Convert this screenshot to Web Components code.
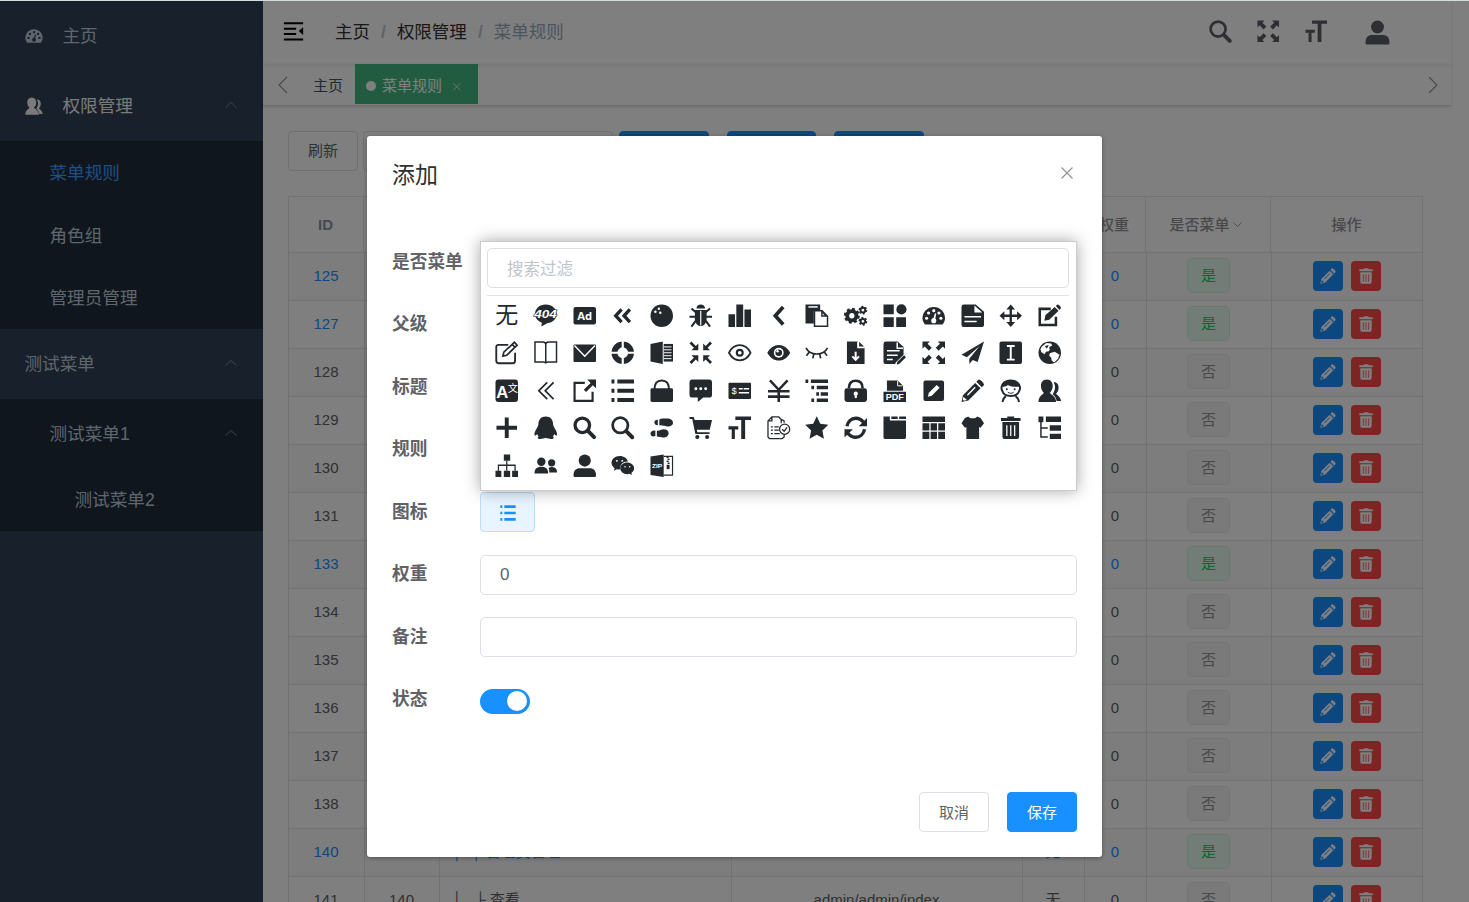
<!DOCTYPE html>
<html lang="zh-CN">
<head>
<meta charset="utf-8">
<title>菜单规则</title>
<style>
html,body{margin:0;height:100%}
body{font:15px/1.2 "Liberation Sans","Noto Sans CJK SC",sans-serif;color:#606266;background:#fff;overflow:hidden}
</style>
</head>
<body>
<admin-app></admin-app>
<script>
const ICONS = {
  none:'',
  e404:'<path d="M12 .5C5.600.5 1 4.800 1 10.300c0 4 3 7.400 7 8.900L7.500 23l6-3.300c6-.6 9.500-4.600 9.500-9.400C23 4.800 18.400.5 12 .5z"/><text x="11.800" y="14.800" text-anchor="middle" font-size="12" font-weight="700" font-style="italic" fill="#fff" stroke="#24292e" stroke-width="1.200" paint-order="stroke" textLength="23" lengthAdjust="spacingAndGlyphs">404</text>',
  ad:'<rect x=".5" y="3" width="23" height="18" rx="2"/><text x="12" y="16.300" text-anchor="middle" font-size="11.500" font-weight="700" fill="#fff" font-family="Open Sans,sans-serif">Ad</text>',
  back2:'<path d="M10.800 5.500 4.800 12l6 6.500M19.300 5.500 13.300 12l6 6.500" fill="none" stroke="currentColor" stroke-width="3.400"/>',
  ball:'<circle cx="12" cy="12" r="11.500"/><g fill="#fff"><circle cx="9" cy="4.800" r="1.200"/><circle cx="5.500" cy="8" r="1.300"/><circle cx="10.500" cy="9" r="1.300"/></g>',
  bug:'<path d="M7.500 4.500C8 1.500 10 .5 12 .5s4 1 4.500 4z"/><path d="M6 6h12v9c0 4-2.500 7.500-6 7.500S6 19 6 15z"/><path d="M12 7v15" stroke="#fff" stroke-width="1.200"/><path d="M7 8.500 2.500 4.500M17 8.500l4.500-4M7 13H.5M17 13h6.500M7 17l-4.500 6M17 17l4.500 6" fill="none" stroke="currentColor" stroke-width="2.100"/>',
  chart:'<path d="M.5 10.500H7.200V23.500H.5zM8.500.5h7v23h-7zM16.800 5.500H23.500v18h-6.700z"/>',
  back:'<path d="M16.500 3 8.500 12l8 9" fill="none" stroke="currentColor" stroke-width="3.800"/>',
  clip:'<path d="M.5.5H15.500V7H9v13H.5z"/><path d="M3.500 3h9.500" stroke="#fff" stroke-width="1.500"/><path d="M9.700 7h7.800l5.500 5.500V22.800H9.700z" fill="#fff" stroke="currentColor" stroke-width="1.500"/><path d="M16.500 6.500V13H23.500z"/><path d="M18 9.500v2h2z" fill="#fff"/>',
  gears:'<circle cx="8" cy="12" r="4.700" fill="none" stroke="currentColor" stroke-width="4"/><circle cx="8" cy="12" r="6.800" fill="none" stroke="currentColor" stroke-width="2.600" stroke-dasharray="2.900 2.440"/><g fill="none" stroke="currentColor"><circle cx="19.300" cy="6.300" r="2.400" stroke-width="2"/><circle cx="19.300" cy="6.300" r="3.700" stroke-width="1.600" stroke-dasharray="1.900 1.970"/><circle cx="19.300" cy="17.700" r="2.400" stroke-width="2"/><circle cx="19.300" cy="17.700" r="3.700" stroke-width="1.600" stroke-dasharray="1.900 1.970"/></g>',
  comp:'<path d="M.5.5H11v10H.5zM.5 13.500H11v10H.5zM13.500 13.500H23.500v10H13.500z"/><circle cx="18.800" cy="5.500" r="5.200"/>',
  dash:'<path d="M3 21C1.500 19 .5 16.800.5 14.500.5 8 5.600 3 12 3s11.500 5 11.500 11.500c0 2.300-1 4.500-2.500 6.500z"/><g fill="var(--hole,#fff)"><circle cx="4.700" cy="14.500" r="1.600"/><circle cx="6.700" cy="9.200" r="1.600"/><circle cx="12" cy="6.800" r="1.600"/><circle cx="17.300" cy="9.200" r="1.600"/><circle cx="19.300" cy="14.500" r="1.600"/><circle cx="12" cy="17" r="2.600"/><path d="M11.200 16 13.200 9.500l1.400.4-1.400 6.600z"/></g>',
  doc:'<path d="M3 .5h12l8.500 7.500V21.500a2 2 0 0 1-2 2H2.500a2 2 0 0 1-2-2V3A2.500 2.500 0 0 1 3 .5z"/><path d="M3.500 13h17M3.500 17.800h12.500" stroke="#fff" stroke-width="1.600" fill="none"/><path d="M13.700 1.500v7.300h8z" fill="#fff"/>',
  drag:'<path d="M12 .5 16.500 5.500H13.200v5.300h5.300V7.500L23.500 12l-5 4.500v-3.300h-5.300v5.300h3.300L12 23.500l-4.500-5h3.300v-5.300H5.500v3.300L.5 12l5-4.500v3.300h5.300V5.500H7.500z"/>',
  edit:'<path d="M13 5H1.800v16.500h16.500v-8.500" fill="none" stroke="currentColor" stroke-width="2.600"/><path d="m6.500 17 1-5.500L17 3l4 4-9.500 9zM18.200 2 20 .6c1.200 0 3.400 2 3.500 3.500L22 6z"/>',
  edit2:'<path d="M13.500 4H3.500C2 4 1.300 4.800 1.300 6v14c0 1.500.8 2.700 2.200 2.700H18c1.500 0 2.500-.8 2.500-2.500V12" fill="none" stroke="currentColor" stroke-width="1.900"/><path d="m8 15.500 1-4L19.800 1.300l2.800 3L12 14.500z M17.500 3.500l3 3" fill="none" stroke="currentColor" stroke-width="1.700"/>',
  book:'<path d="M1 1h8c2 0 3 1 3 2.500C12 2 13 1 15 1h8v20.500h-8.500c-1.500 0-2.500.5-2.500 1.500 0-1-1-1.500-2.500-1.500H1zM12 3.500V22" fill="none" stroke="currentColor" stroke-width="1.500"/>',
  mail:'<rect x=".5" y="3.500" width="23" height="18" rx="1"/><path d="M1.500 4.500 12 15.500 22.500 4.500" fill="none" stroke="#fff" stroke-width="1.500"/>',
  ring:'<circle cx="12" cy="12" r="8.500" fill="none" stroke="currentColor" stroke-width="6"/><path d="M12 0v8M12 16v8M0 12h8M16 12h8" stroke="#fff" stroke-width="2.200"/>',
  excel:'<path d="M.5 3 13 .5v23L.5 21z"/><path d="M14 3h9.500v18H14z"/><path d="M14 6h8M14 9h8M14 12h8M14 15h8M14 18h8" stroke="#fff" stroke-width="1"/>',
  exitfs:'<path d="M9.500 2.500V9.500H2.500L5 7 .5 2.500l2-2L7 5zM14.500 2.500V9.500H21.500L19 7 23.500 2.500l-2-2L17 5zM9.500 21.500V14.500H2.500L5 17 .5 21.500l2 2L7 19zM14.500 21.500V14.500H21.500L19 17l4.500 4.500-2 2L17 19z"/>',
  eye:'<path d="M1 12C3.500 7 7.500 4.300 12 4.300s8.500 2.700 11 7.700c-2.500 5-6.500 7.700-11 7.700S3.500 17 1 12z" fill="none" stroke="currentColor" stroke-width="1.800"/><circle cx="12" cy="12" r="3" fill="none" stroke="currentColor" stroke-width="2.200"/>',
  eyeopen:'<path d="M.3 12C3 7 7.200 4 12 4s9 3 11.700 8c-2.700 5-6.900 8-11.700 8S3 17 .3 12z"/><circle cx="12" cy="12" r="5" fill="#fff"/><circle cx="12" cy="12" r="3.400"/><circle cx="10.800" cy="10.500" r="1.300" fill="#fff"/>',
  closed:'<path d="M1 7c2 4 6 6.300 11 6.300S21 11 23 7M4.500 11 1.500 15M9 13.300 8 17.800M15 13.300l1 4.500M19.500 11l3 4" fill="none" stroke="currentColor" stroke-width="1.700"/>',
  dl:'<path d="M3 .5h11V7h7v16.500H3z"/><path d="M15.200.5 21 6h-5.800z"/><path d="M14.500 1v5.500H21M11.900 11v8M8.500 15.700l3.400 3.500 3.400-3.500" fill="none" stroke="#fff" stroke-width="2"/>',
  form:'<path d="M3 .5h12l6 5.500v8L13 22l-.5 1.500H2.500a2 2 0 0 1-2-2V3A2.500 2.500 0 0 1 3 .5z"/><path d="M14.500 1.500v6h6M4 10h13M4 14.500h11M4 19h6" stroke="#fff" stroke-width="1.500" fill="none"/><path d="m14.500 21.500 7-7 2 2-7 7-2.500.4z"/>',
  fs:'<path d="M.5.5H8L5.700 2.800 10 7 7 10 2.800 5.700.5 8zM23.500.5H16l2.300 2.300L14 7l3 3 4.200-4.300L23.500 8zM.5 23.500H8l-2.300-2.300L10 17l-3-3-4.200 4.300L.5 16zM23.500 23.500H16l2.300-2.300L14 17l3-3 4.200 4.300 2.300-2.300z"/>',
  plane:'<path d="M23.500.5.5 14l5.500 2.500L19 5 8.500 18v5.500l3.500-4 5 2z"/>',
  guide:'<rect x=".5" y=".5" width="23" height="23" rx="2"/><path d="M8 5h8M8 19h8M12 5v14" stroke="#fff" stroke-width="2" fill="none"/>',
  globe:'<circle cx="12" cy="12" r="11.500"/><path d="M4 5.500 8.500 2l5 .5 1 2L11.500 6 12 9l-1 1.500L8 11l-1 2.500-3.500-2-1-3zM12 12.500l5-1.500 5 3-1.500 4-4 4-2.500-2-.5-3-2-2z" fill="#fff"/><path d="m7 5 4-1-2 4z"/>',
  lang:'<rect x=".5" y=".5" width="23" height="23" rx="3"/><text x="1.300" y="19" font-size="17" font-weight="700" fill="#fff">A</text><text x="13" y="13" font-size="10.500" fill="#fff">文</text>',
  thin2:'<path d="M13.500 3.500 5 12l8.500 8.500M20 3.500 11.500 12l8.500 8.500" fill="none" stroke="currentColor" stroke-width="1.800"/>',
  link:'<path d="M12 4H1.600v18.400H20V13" fill="none" stroke="currentColor" stroke-width="2.200"/><path d="M14.500.5h9v9l-3.200-3.200-7 7L11 11l7-7z"/>',
  list:'<path d="M6.500.5h17v4h-17zM6.500 10h17v4h-17zM6.500 19.500h17v4h-17zM.5.5H3.500v4H.5zM.5 10h3v4h-3zM.5 19.500h3v4h-3z"/>',
  lock:'<rect x=".5" y="9.500" width="23" height="14" rx="1.500"/><path d="M4.500 11C4.500 4.500 7.500 1.500 12 1.500S19.500 4.500 19.500 11" fill="none" stroke="currentColor" stroke-width="2"/>',
  msg:'<path d="M3.500.5h17a3 3 0 0 1 3 3V16a3 3 0 0 1-3 3H14.500L9 23.500V19H3.500a3 3 0 0 1-3-3V3.500a3 3 0 0 1 3-3z"/><g fill="#fff"><circle cx="7" cy="10" r="1.500"/><circle cx="12" cy="10" r="1.500"/><circle cx="17" cy="10" r="1.500"/></g>',
  card:'<rect x=".5" y="3.800" width="23" height="16.700" rx="1"/><text x="3.500" y="15.500" font-size="9.500" fill="#fff">$</text><path d="M11 10h4M16 10h5.500M11 14h10.500" stroke="#fff" stroke-width="1.500"/>',
  yen:'<path d="M3 1.500 12 11l9-9.500M12 11v12.500M1 12.500h22M1 18h22" fill="none" stroke="currentColor" stroke-width="2.600"/>',
  nested:'<path d="M6 .5h17.500v3.500H6zM12 7h11.500v3.500H12zM16 13.500h7.500V17H16zM12 20h11.500v3.500H12zM.5.5h2.800v3.500H.5zM6.500 7h2.800v3.500H6.500zM11.500 13.500h2.800V17h-2.800zM6.500 20h2.800v3.500H6.500z"/>',
  pwd:'<rect x=".5" y="9.500" width="23" height="14" rx="2.500"/><path d="M5 9.500C5 4 7.800 1.800 12 1.800S19 4 19 9.500" fill="none" stroke="currentColor" stroke-width="2.700"/><path d="M12 13.500v6" stroke="#fff" stroke-width="2.200"/><circle cx="12" cy="15" r="2.200" fill="#fff"/>',
  pdf:'<path d="M4 1.500h11l5.500 5.500v5H4z"/><path d="M15 2v5h5" fill="none" stroke="#fff" stroke-width="1"/><rect x=".5" y="13" width="23" height="10.500"/><text x="12" y="21.700" text-anchor="middle" font-size="9.300" font-weight="700" fill="#fff">PDF</text>',
  sqpen:'<rect x="1.500" y="1.500" width="21" height="21" rx="2"/><path d="m6 18 1-4L15 6l3 3-8 8z" fill="#fff"/>',
  pen:'<path d="M.5 23.500 2 16.500 14.500 4l5.500 5.500L7.500 22zM15.700 2.800 18 .5c2 0 5.500 3.500 5.500 5.500l-2.300 2.300z"/><path d="M6.500 16.500 14.500 8.500" stroke="var(--hole,#fff)" stroke-width="1.400"/><path d="m2.500 18 3.500 3.500-3 .8-1.200-1.200z" fill="var(--hole,#fff)"/>',
  face:'<path d="M3.500 12.500C.5 7 5 1.500 12 1.500S23.500 7 20.500 12.500C18.500 19 5.500 19 3.500 12.500zM7 17.500c-2 1.500-3 3-3.500 6M17 17.500c2 1.500 3 3 3.500 6" fill="none" stroke="currentColor" stroke-width="2"/><path d="M2.500 8C3 4 7 1.500 12 1.500S21 4 21.500 8C15 8 11 7.500 9 6 7.500 7.500 5 8 2.500 8z"/><circle cx="8" cy="10.500" r="1"/><circle cx="16" cy="10.500" r="1"/><path d="M9 13.500c2 1.500 4 1.500 6 0" fill="none" stroke="currentColor"/>',
  peoples:'<path d="M16 3.500c3-.5 5.300 2 5 6-.2 2.500-1 4-2.500 5.500.5 1 5 3.500 5 7.500H19c-.5-3-1.500-5-4-7 2.500-4 3.500-8 1-12z"/><path d="M9 .5c4 0 6 3 6 6.500 0 3-1.200 5.700-3 7.300 1 1.500 6.500 3.200 6.500 9.200H.5C.5 17.500 5 15.800 6 14.300 4.200 12.700 3 10 3 7 3 3.500 5 .5 9 .5z"/>',
  plus:'<path d="M10 1.500h4v8.500h8.500v4H14v8.500h-4V14H1.500v-4H10z"/>',
  qq:'<path d="M12 .5c5 0 7.500 3.500 7.500 8 0 1.500 1 3 2.500 5.500 2 3.500 1.800 6 .8 6-.8 0-1.600-1-2-1.600-.3 1-.8 1.800-1.600 2.500 1.500.6 1.300 2.600-1.700 2.600-2 0-4-.5-5.500-1.200-1.500.7-3.500 1.200-5.500 1.200-3 0-3.200-2-1.700-2.600C4 20.200 3.500 19.400 3.200 18.400c-.4.600-1.200 1.600-2 1.600-1 0-1.200-2.500.8-6 1.500-2.500 2.500-4 2.500-5.500 0-4.500 2.500-8 7.500-8z"/>',
  search:'<circle cx="9.500" cy="9.500" r="7.400" fill="none" stroke="currentColor" stroke-width="3.400"/><path d="m15.500 15.500 6 6" stroke="currentColor" stroke-width="4" stroke-linecap="round"/>',
  search2:'<circle cx="9.500" cy="9.500" r="7.800" fill="none" stroke="currentColor" stroke-width="2.800"/><path d="m16 16 5.700 5.700" stroke="currentColor" stroke-width="4" stroke-linecap="round"/>',
  feet:'<path d="M9.500 3.500C12 2 14 2.800 17 2.500c4.500 0 6.500 2 6.500 4.300 0 2.700-3 4-6 3.800-3 0-4-1.300-8-1zM8 3.800v5.500C6 9.800 4.500 8.500 4.500 6.500S6 3.500 8 3.800zM7 15c3.500.2 4-1.500 7-1.500 3 0 5 1.300 5 4s-2.500 4.500-5.500 4.500c-2.500 0-4-1-6.500-1zM5.500 15v5.500C2.500 21.500.5 20 .5 18s2-3.500 5-3z"/>',
  cart:'<path d="M.5 1h4.300l1 3H23.500l-2.300 10H8l.5 2.500H21v2H6.500L3.300 3H.5z"/><circle cx="8.500" cy="21.500" r="2.100"/><circle cx="18.500" cy="21.500" r="2.100"/>',
  size:'<path d="M7.500.5h16V4h-6v19.500h-4V4h-6zM.5 10.500H10.500v3.200H7v9.800H3.800v-9.800H.5z"/>',
  skill:'<path d="M14.500 7.500V3.500L12 1H5L1 5v16.500l1.500 1.500H13M5 1v4H1M14.500 3.500l3 1.500v2M4 11h2M7.500 11H12M4 14.500h2M7.500 14.500H12M4 18h2M7.500 18H13" fill="none" stroke="currentColor" stroke-width="1.300"/><circle cx="18" cy="13.500" r="5.200" fill="none" stroke="currentColor" stroke-width="1.300"/><path d="m15.500 13.500 2 2 3-4M17.500 19v2.500L15.500 23H13" fill="none" stroke="currentColor" stroke-width="1.300"/>',
  star:'<path d="m12 .3 3.600 7.600 8.200 1.100-6 5.800 1.500 8.400-7.300-4-7.300 4 1.500-8.400-6-5.800 8.200-1.100z"/>',
  refresh:'<path d="M3 10.500C4 5.500 7.500 2.300 12 2.300c3.500 0 6 1.500 8 4.200M21 13.500c-1 5-4.500 8.200-9 8.200-3.500 0-6-1.500-8-4.200" fill="none" stroke="currentColor" stroke-width="3.400"/><path d="M23.500 2v8.500H15zM.5 22v-8.500H9z"/>',
  tab:'<path d="M.5.500H7V4.500h16.500V22a1.500 1.500 0 0 1-1.500 1.500H2A1.500 1.500 0 0 1 .5 22zM8.500.5h6.500V3H8.500zM16.500.5h7V3h-7z"/>',
  table:'<path d="M.5.500h23V6H.5zM.5 7.500H7.500v7.200H.5zM8.800 7.500h6.500v7.200H8.800zM16.600 7.500h6.900v7.200h-6.900zM.5 16H7.500v7.500H.5zM8.800 16h6.500v7.500H8.800zM16.600 16h6.900v7.500h-6.900z"/>',
  shirt:'<path d="M7.500.500c1 2.500 8 2.500 9 0L20 2l3.500 5.500-3.500 4.500-1.500-.7V23.500h-13V11.300L4 12 .5 7.500 4 2z"/>',
  trash:'<path d="M8.500.500h7v1.500H22v3H2V2h6.500zM3.500 6.200h17v15.300a2 2 0 0 1-2 2h-13a2 2 0 0 1-2-2z"/><path d="M8 9.500v11M12 9.500v11M16 9.500v11" stroke="var(--hole,#fff)" stroke-width="1.300"/>',
  treetab:'<path d="M.5.500H5.500v6H.5zM8 .5h15.500v5.500H8zM12 9.500h11.500v5.500H12zM12 18h11.500v5.500H12z"/><path d="M3 6v15.500h7M3 12.200h7" fill="none" stroke="currentColor" stroke-width="1.500"/>',
  tree:'<path d="M9 .5h6.500v6.500H9zM.5 17h6v6.500h-6zM9 17h6.500v6.500H9zM17.500 17h6v6.500h-6z"/><path d="M12 7v10M3.500 17v-5.500h17V17" fill="none" stroke="currentColor" stroke-width="1.300"/>',
  users:'<circle cx="7.500" cy="8" r="4.300"/><path d="M.5 20c0-5 2.500-7 7-7s7 2 7 7zM15.500 19H23.500c0-4-1.500-5.500-5-5.800-1.500 0-2.800.3-3.700 1 .8 1.500 1 2.500.7 4.800z"/><circle cx="18" cy="9" r="3.700"/>',
  user:'<circle cx="12" cy="6.700" r="6.200"/><path d="M.5 22c0-5.500 2.500-7.500 6.500-7.500h10c4 0 6.500 2 6.500 7.500 0 1-.5 1.500-1.500 1.500H2C1 23.500.5 23 .5 22z"/>',
  wechat:'<path d="M9 2C4 2 .5 5 .5 9c0 2.300 1.200 4.200 3.200 5.500L3 17l3-1.500c.9.200 1.900.4 3 .4l.6 0C8.500 11 12.500 7.500 17.300 7.700 16.500 4.300 13 2 9 2z"/><path d="M16.500 8.700c-4 0-7 2.600-7 5.900s3 6 7 6c.8 0 1.700-.1 2.500-.4l2.500 1.300-.7-2c1.700-1.200 2.800-2.900 2.800-4.900 0-3.300-3.200-5.900-7.100-5.900z"/><g fill="#fff"><circle cx="6" cy="7" r="1"/><circle cx="11.500" cy="7" r="1"/><circle cx="14.300" cy="13" r=".8"/><circle cx="19" cy="13" r=".8"/></g>',
  zip:'<path d="M.5 2.500 14 .5v23L.5 21.500z"/><path d="M14 2.500h9v19h-9" fill="none" stroke="currentColor" stroke-width="1.200"/><path d="M17 3.500h2M18 5.500h2M17 7.500h2M18 9.500h2" stroke="currentColor" stroke-width="1.500"/><rect x="17" y="11" width="3" height="4.500"/><text x="2" y="14.500" font-size="6.300" font-weight="700" fill="#fff" textLength="10.500" lengthAdjust="spacingAndGlyphs">ZIP</text>',
  fold:'<path d="M1 1.500h22v2.200H1zM1 7.700h14v2.200H1zM1 13.700h14v2.200H1zM1 20h22v2.200H1zM23 7v9l-5-4.500z"/>',
  up:'<path d="m1 17 11-10 11 10" fill="none" stroke="currentColor" stroke-width="1.700"/>',
  down:'<path d="m1 7 11 10L23 7" fill="none" stroke="currentColor" stroke-width="2.400"/>',
  left:'<path d="M18 0 6 12l12 12" fill="none" stroke="currentColor" stroke-width="1.700"/>',
  right:'<path d="M6 0l12 12L6 24" fill="none" stroke="currentColor" stroke-width="1.700"/>',
  close:'<path d="m1 1 22 22M23 1 1 23" fill="none" stroke="currentColor" stroke-width="2.400"/>'
};

function define(name, render){
  customElements.define(name, class extends HTMLElement{
    connectedCallback(){
      if(this.shadowRoot) return;
      this.attachShadow({mode:'open'}).innerHTML = render(this);
    }
  });
}

define('ui-icon', el => `<style>:host{display:inline-block;flex:none;width:${el.getAttribute('size')||23}px;height:${el.getAttribute('size')||23}px}svg{display:block;width:100%;height:100%;overflow:visible}</style>
<svg viewBox="0 0 24 24" fill="currentColor">${ICONS[el.getAttribute('name')]}</svg>`);

define('menu-item', el => `<style>
:host{display:flex;align-items:center;box-sizing:border-box;height:${el.getAttribute('h')||70}px;padding:0 26px 0 ${el.getAttribute('indent')||25}px;font-size:17.6px;color:var(--c,#bfcbd9);--hole:#304156}
.t{flex:1;padding-top:2px;margin-left:-.5px}ui-icon.i{margin-right:20px}.a{color:#909399;margin-top:-3px}</style>
${el.hasAttribute('icon')?`<ui-icon class="i" name="${el.getAttribute('icon')}" size="18"></ui-icon>`:''}<span class="t"><slot></slot></span>${el.hasAttribute('open')?'<ui-icon class="a" name="up" size="12"></ui-icon>':''}`);

define('side-menu', () => `<style>
:host{display:block;width:263px;flex:none;background:#304156}
.sub{background:#1f2d3d}.on{--c:#409eff}.w{--c:#f4f4f5}</style>
<menu-item icon="dash">主页</menu-item>
<menu-item class="w" icon="peoples" open>权限管理</menu-item>
<div class="sub"><menu-item class="on" indent="50" h="63">菜单规则</menu-item><menu-item indent="50" h="62.5">角色组</menu-item><menu-item indent="50" h="62.5">管理员管理</menu-item></div>
<menu-item open>测试菜单</menu-item>
<div class="sub"><menu-item indent="50" open>测试菜单1</menu-item><menu-item indent="75" h="62">测试菜单2</menu-item></div>`);

define('top-bar', () => `<style>
:host{display:flex;align-items:center;height:63px;box-sizing:border-box;padding:0 61px 0 20px;box-shadow:0 1px 4px rgba(0,21,41,.12);font-size:17.5px;color:#303133}
.f{color:#000;margin:-3px 31px 0 0}.s{margin:0 11px;font-weight:700;color:#c0c4cc}.l{color:#97a8be}.r{margin-left:auto;display:flex;color:#5a5e66;align-items:center;gap:25.500px;margin-top:-2px}.u{margin:2px 0 0 12px}nav{display:flex;margin-top:-1px}</style>
<ui-icon class="f" name="fold" size="21"></ui-icon>
<nav><span>主页</span><span class="s">/</span><span>权限管理</span><span class="s">/</span><span class="l">菜单规则</span></nav>
<div class="r"><ui-icon name="search2" size="23"></ui-icon><ui-icon name="fs" size="22.500"></ui-icon><ui-icon name="size" size="22.500"></ui-icon><ui-icon class="u" name="user" size="25"></ui-icon></div>`);

define('tab-bar', () => `<style>
:host{display:flex;height:42px;box-sizing:border-box;border-bottom:1px solid #d8dce5;box-shadow:0 1px 3px rgba(0,0,0,.14);font-size:15px;color:#495060}
.a{width:39px;display:flex;align-items:center;justify-content:center;color:#909399}.a:first-child{border-right:1px solid #f0f0f0;width:38px}.a:first-child ui-icon{margin-right:4px}.a:last-child{margin-left:auto}.a:last-child ui-icon{margin-left:3px}
.t{height:40px;box-sizing:border-box;display:flex;align-items:center;padding:3px 12px 0 11px}.on{background:#42b983;color:#fff;padding:3px 17px 0 11px}.d{width:10px;height:10px;border-radius:5px;background:#fff;margin-right:6px}.x{margin:2px 0 0 11px}</style>
<div class="a"><ui-icon name="left" size="16"></ui-icon></div><div class="t">主页</div><div class="t on"><i class="d"></i>菜单规则<ui-icon class="x" name="close" size="7.500"></ui-icon></div><div class="a"><ui-icon name="right" size="16"></ui-icon></div>`);

define('tool-bar', () => `<style>
:host{display:flex;height:40px;margin:25px 0 25px 25px}
span{box-sizing:border-box;border:1px solid #dcdfe6;border-radius:4px}.n{width:70px;display:flex;align-items:center;justify-content:center;margin-right:5px}.i{width:250px;margin-right:6px}.b{width:89.500px;background:#1890ff;border-color:#1890ff;margin-right:18px}</style>
<span class="n">刷新</span><span class="i"></span><span class="b"></span><span class="b"></span><span class="b"></span>`);

define('state-tag', el => `<style>
:host{display:flex;align-items:center;justify-content:center;box-sizing:border-box;width:43px;height:35px;border-radius:5px;border:1px solid #e9e9eb;background:#f4f4f5;color:#909399}
:host([yes]){background:#e7faf0;border-color:#d0f5e0;color:#13ce66}</style><slot></slot>`);

define('row-actions', () => `<style>
:host{display:flex;gap:8px}span{width:30px;height:30px;border-radius:4px;background:#1890ff;color:#fff;--hole:#1890ff;display:flex;align-items:center;justify-content:center}.d{background:#ff4949;--hole:#ff4949}</style>
<span><ui-icon name="pen" size="16"></ui-icon></span><span class="d"><ui-icon name="trash" size="16"></ui-icon></span>`);

define('rule-table', () => {
  const rows = [[125,1],[127,1],[128,0],[129,0],[130,0],[131,0],[133,1],[134,0],[135,0],[136,0],[137,0],[138,0],[140,1,'','│&nbsp;&nbsp;├ 管理员管理','','无'],[141,0,'140','│&nbsp;&nbsp;&nbsp;├ 查看','admin/admin/index','无']];
  return `<style>
:host{display:block;width:1135px;box-sizing:border-box;margin-left:25px;border:1px solid #dfe6ec;border-bottom:0}
.r{display:grid;grid-template-columns:76px 75px 292px 291px 62px 62px 125px 150px;height:48px}
.r>div{box-sizing:border-box;border-right:1px solid #dfe6ec;border-bottom:1px solid #dfe6ec;display:flex;align-items:center;justify-content:center;white-space:nowrap;padding:0 1px 2px 0}
.r>div:nth-child(8){border-right:0;padding-right:0}
.r.h{height:56px;grid-template-columns:75px 75px 292px 291px 62px 62px 125px 151px;font-weight:500;color:#909399;background:#fff}
.r.h>div{padding:0 1px 0 0}.r.h>div:nth-child(7){padding-right:5px}.r.h>div:nth-child(8){padding:0}
.y{color:#1890ff}.r:nth-child(odd){background:#fafafa}.r>.n{justify-content:flex-start;padding-left:13px}.h ui-icon{margin-left:3px}</style>
<div class="r h"><div><b>ID</b></div><div></div><div></div><div></div><div></div><div>权重</div><div>是否菜单<ui-icon name="down" size="9"></ui-icon></div><div>操作</div></div>
${rows.map(([id,y,p='',n='',u='',c=''])=>`<div class="r ${y?'y':''}"><div>${id}</div><div>${p}</div><div class="n">${n}</div><div>${u}</div><div>${c}</div><div>0</div><div><state-tag ${y?'yes':''}>${y?'是':'否'}</state-tag></div><div><row-actions></row-actions></div></div>`).join('')}`;
});

define('icon-picker', () => {
  const names = 'none e404 ad back2 ball bug chart back clip gears comp dash doc drag edit edit2 book mail ring excel exitfs eye eyeopen closed dl form fs plane guide globe lang thin2 link list lock msg card yen nested pwd pdf sqpen pen face peoples plus qq search search2 feet cart size skill star refresh tab table shirt trash treetab tree users user wechat zip'.split(' ');
  return `<style>
:host{display:block;box-sizing:border-box;width:597px;height:250px;padding:6px 7px 0 6px;border:1px solid #ccc;background:#fff;box-shadow:0 0 15px rgba(0,0,0,.35)}
.q{box-sizing:border-box;height:40px;border:1px solid #dcdfe6;border-radius:5px;display:flex;align-items:center;padding:3px 19px 0;font-size:16.5px;color:#c0c4cc}
.g{margin-top:7px;border-top:1px solid #dfe2e6;display:grid;grid-template-columns:repeat(15,1fr);grid-auto-rows:37.5px;color:#24292e}
.g>*{place-self:center;padding:1px 0 0 .6px}.z{font-size:23px;line-height:28px}</style>
<div class="q">搜索过滤</div><div class="g">${names.map(n=>n==='none'?'<span class="z">无</span>':`<ui-icon name="${n}" size="23.500"></ui-icon>`).join('')}</div>`;
});

define('form-row', el => `<style>
:host{display:flex;height:40px;align-items:center}label{width:88px;font-size:17.7px;font-weight:700;color:#606266;flex:none;padding-top:1px}
.f{flex:1;height:40px;box-sizing:border-box;border:1px solid #dcdfe6;border-radius:5px;display:flex;align-items:center;padding:2px 0 0 19px;font-size:17px}</style>
<label>${el.getAttribute('label')}</label>${el.hasAttribute('custom')?'<slot></slot>':'<div class="f"><slot></slot></div>'}`);

define('add-dialog', () => `<style>
:host{display:block;box-sizing:border-box;width:735px;height:721px;padding:25px;background:#fff;border-radius:3px;box-shadow:0 1px 4px rgba(0,0,0,.35);position:absolute;left:367px;top:135px}
header{display:flex;justify-content:space-between;align-items:center;height:28px;font-size:23px;color:#303133}header span{padding-top:2px}header ui-icon{color:#909399;margin:-5px 4px 0 0}
main{margin-top:53px;display:flex;flex-direction:column;gap:22.500px;position:relative}
.b{width:55px;height:40px;box-sizing:border-box;border:1px solid #badeff;background:#e8f4ff;border-radius:4px;color:#1890ff;display:flex;align-items:center;justify-content:center;padding-top:1px}
.s{width:50px;height:25px;border-radius:13px;background:#1890ff;display:flex;justify-content:flex-end;align-items:center;padding-right:3px;box-sizing:border-box;margin-top:3px}.s i{width:20px;height:20px;border-radius:50%;background:#fff}
icon-picker{position:absolute;left:88px;top:-1px}
footer{display:flex;justify-content:flex-end;gap:18px;margin-top:72.500px}footer span{width:70px;height:40px;box-sizing:border-box;border:1px solid #dcdfe6;border-radius:4px;display:flex;align-items:center;justify-content:center;font-size:15px;padding-top:1px}footer .p{background:#1890ff;border-color:#1890ff;color:#fff}</style>
<header><span>添加</span><ui-icon name="close" size="12"></ui-icon></header>
<main><form-row label="是否菜单" custom></form-row><form-row label="父级"></form-row><form-row label="标题"></form-row><form-row label="规则"></form-row><form-row label="图标" custom><div class="b"><ui-icon name="list" size="16"></ui-icon></div></form-row><form-row label="权重">0</form-row><form-row label="备注"></form-row><form-row label="状态" custom><div class="s"><i></i></div></form-row><icon-picker></icon-picker></main>
<footer><span>取消</span><span class="p">保存</span></footer>`);

define('admin-app', () => `<style>
:host{display:flex;position:relative;box-sizing:border-box;height:902px;border-top:1px solid #d5dcde;overflow:hidden}
.m{flex:1;min-width:0}.bars{width:1188px}
.mask{position:absolute;inset:0;background:rgba(0,0,0,.5)}</style>
<side-menu></side-menu><div class="m"><div class="bars"><top-bar></top-bar><tab-bar></tab-bar></div><tool-bar></tool-bar><rule-table></rule-table></div>
<div class="mask"></div><add-dialog></add-dialog>`);
</script>
</body>
</html>
